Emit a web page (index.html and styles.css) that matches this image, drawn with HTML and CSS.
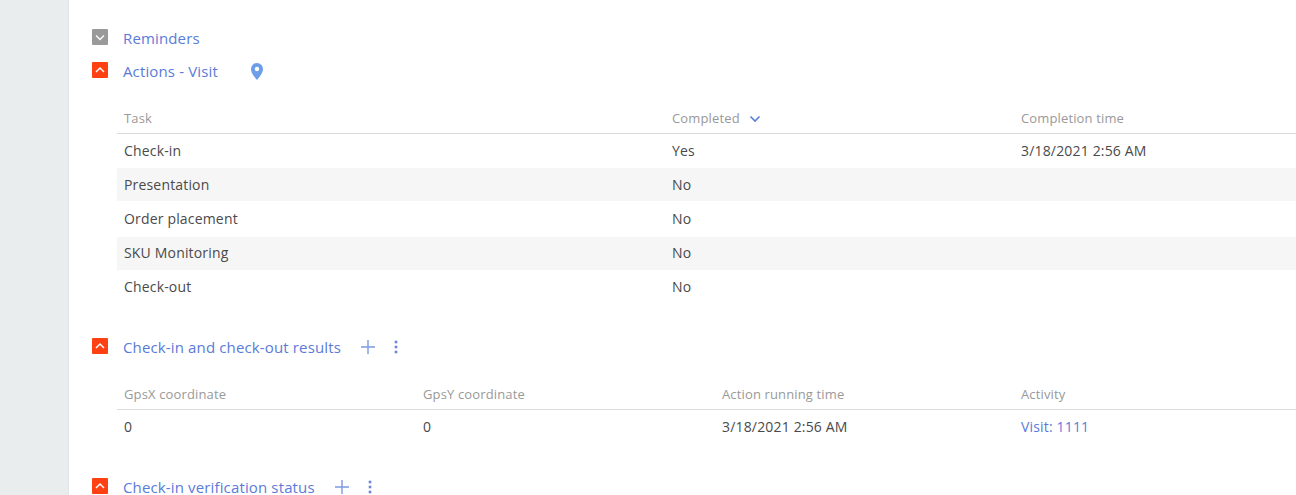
FILE: index.html
```html
<!DOCTYPE html>
<html lang="en">
<head>
<meta charset="utf-8">
<title>Visit</title>
<link rel="stylesheet" href="styles.css">
</head>
<body>
<div class="page">
  <aside class="rail"></aside>
  <main class="content">
    <section class="group">
      <div class="group-head">
        <span class="toggle toggle-closed"><svg viewBox="0 0 16 16" width="16" height="16"><path d="M4 6.500 8 10.500l4-4" fill="none" stroke="#fff" stroke-width="1.300"/></svg></span>
        <span class="group-title">Reminders</span>
      </div>
    </section>
    <section class="group">
      <div class="group-head">
        <span class="toggle"><svg viewBox="0 0 16 16" width="16" height="16"><path d="M4 10 8 6l4 4" fill="none" stroke="#fff" stroke-width="1.500"/></svg></span>
        <span class="group-title">Actions - Visit</span>
        <svg class="pin" viewBox="0 0 14 17" width="14" height="17"><path fill-rule="evenodd" d="M7 0a6 6 0 0 1 6 6c0 4-3.800 8.500-6 11C4.800 14.500 1 10 1 6a6 6 0 0 1 6-6Zm0 3.800a2.200 2.200 0 1 0 0 4.400 2.200 2.200 0 0 0 0-4.400Z" fill="#6c9fe8"/></svg>
      </div>
      <div class="grid-table tasks">
        <div class="row head">
          <span>Task</span>
          <span>Completed <svg class="sort" viewBox="0 0 12 8" width="12" height="8"><path d="M1.500 1.500 6 6l4.500-4.500" fill="none" stroke="#5b82d6" stroke-width="1.700"/></svg></span>
          <span>Completion time</span>
        </div>
        <div class="row"><span>Check-in</span><span>Yes</span><span>3/18/2021 2:56 AM</span></div>
        <div class="row alt alt-low"><span>Presentation</span><span>No</span><span></span></div>
        <div class="row tall"><span>Order placement</span><span>No</span><span></span></div>
        <div class="row alt"><span>SKU Monitoring</span><span>No</span><span></span></div>
        <div class="row"><span>Check-out</span><span>No</span><span></span></div>
      </div>
    </section>
    <section class="group group-results">
      <div class="group-head">
        <span class="toggle"><svg viewBox="0 0 16 16" width="16" height="16"><path d="M4 10 8 6l4 4" fill="none" stroke="#fff" stroke-width="1.500"/></svg></span>
        <span class="group-title">Check-in and check-out results</span>
        <span class="tools">
          <svg viewBox="0 0 14 14" width="14" height="14"><path d="M7 0v14M0 7h14" stroke="#7c9ae0" stroke-width="1.400"/></svg>
          <svg viewBox="0 0 4 14" width="4" height="14"><g fill="#6a88d8"><rect x="0.700" y="0.700" width="2.600" height="2.600"/><rect x="0.700" y="5.700" width="2.600" height="2.600"/><rect x="0.700" y="10.700" width="2.600" height="2.600"/></g></svg>
        </span>
      </div>
      <div class="grid-table results">
        <div class="row head">
          <span>GpsX coordinate</span><span>GpsY coordinate</span><span>Action running time</span><span>Activity</span>
        </div>
        <div class="row"><span>0</span><span>0</span><span>3/18/2021 2:56 AM</span><span class="link">Visit: 1111</span></div>
      </div>
    </section>
    <section class="group group-status">
      <div class="group-head">
        <span class="toggle"><svg viewBox="0 0 16 16" width="16" height="16"><path d="M4 10 8 6l4 4" fill="none" stroke="#fff" stroke-width="1.500"/></svg></span>
        <span class="group-title">Check-in verification status</span>
        <span class="tools">
          <svg viewBox="0 0 14 14" width="14" height="14"><path d="M7 0v14M0 7h14" stroke="#7c9ae0" stroke-width="1.400"/></svg>
          <svg viewBox="0 0 4 14" width="4" height="14"><g fill="#6a88d8"><rect x="0.700" y="0.700" width="2.600" height="2.600"/><rect x="0.700" y="5.700" width="2.600" height="2.600"/><rect x="0.700" y="10.700" width="2.600" height="2.600"/></g></svg>
        </span>
      </div>
    </section>
  </main>
</div>
</body>
</html>
```
FILE: styles.css
```css
* { box-sizing: border-box; }
html, body { margin: 0; height: 100%; overflow: hidden; background: #fff; }
body { font-family: "Open Sans", "Liberation Sans", sans-serif; color: #444; }
.page { display: flex; height: 495px; overflow: hidden; }
.rail { width: 69px; flex: none; background: #e9eded; border-right: 1px solid #e3e6e6; }
.content { flex: 1; min-width: 0; padding: 27px 0 0 23px; }
.group-head { display: flex; align-items: center; height: 22px; margin-bottom: 11px; }
.toggle { width: 16px; height: 16px; flex: none; margin-bottom: 2px; background: #ff4013; border-radius: 1px; display: flex; }
.toggle-closed { background: #9a9a9a; }
.group-title { margin-left: 15px; font-size: 15px; letter-spacing: 0.14px; line-height: 22px; color: #5b7bd8; }
.pin { margin-left: 32px; }
.tools { display: flex; align-items: center; gap: 19px; margin-left: 20px; }
.grid-table { margin-left: 25px; font-size: 14px; letter-spacing: 0.17px; }
.tasks { margin-top: 21px; }
.results { margin-top: 21px; }
.row { display: grid; height: 34px; align-items: center; padding: 0 0 2px 7px; color: #4a4a4a; }
.tasks .row { grid-template-columns: 548px 349px 1fr; }
.results .row { grid-template-columns: 299px 299px 299px 1fr; }
.row.head { height: 31px; font-size: 13px; letter-spacing: 0.14px; color: #999; border-bottom: 1px solid #dcdcdc; padding-bottom: 1px; }
.row.alt { height: 33px; background: #f6f6f6; }
.row.alt-low { padding-bottom: 0; }
.row.tall { height: 36px; }
.sort { margin-left: 6px; }
.link { color: #5b7bd8; }
.group-results { margin-top: 32px; }
.group-status { margin-top: 32px; }
```
